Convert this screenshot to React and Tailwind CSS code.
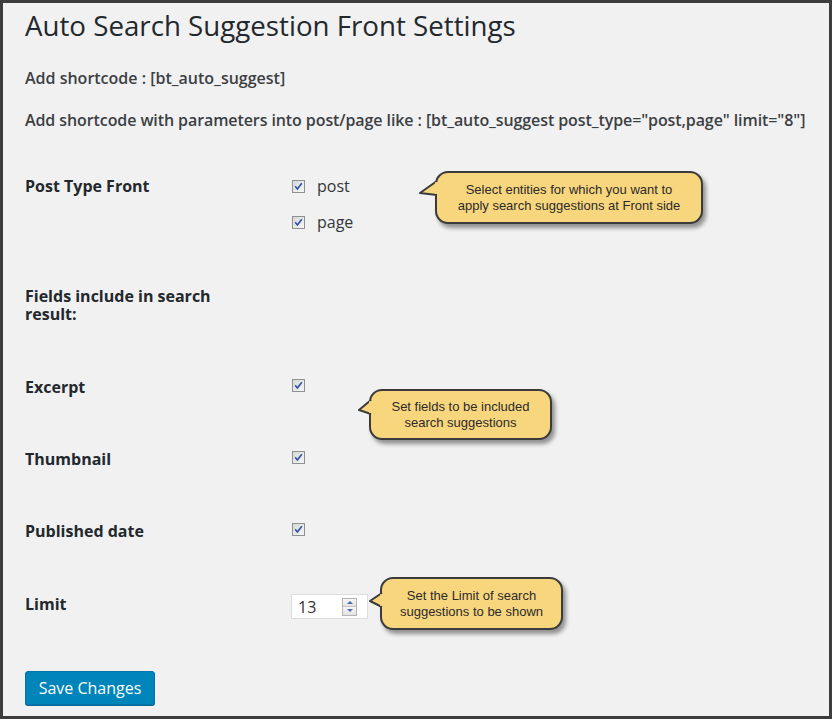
import React from "react";

const Check = () => (
  <svg width="13" height="13" viewBox="0 0 13 13" className="block shrink-0">
    <defs>
      <linearGradient id="cbg" x1="0" y1="0" x2="1" y2="1">
        <stop offset="0" stopColor="#d6d6d6" />
        <stop offset="1" stopColor="#f8f8f8" />
      </linearGradient>
    </defs>
    <rect x="0.5" y="0.5" width="12" height="12" fill="url(#cbg)" stroke="#8f9092" />
    <path d="M3.2 6.3 L5.4 9 L9.8 3.2" fill="none" stroke="#2f4fa6" strokeWidth="1.6" />
  </svg>
);

const Bubble = ({ className, join, tip, len, lines }) => (
  <div
    className={`absolute rounded-[13px] border-2 border-[#3b3b3b] bg-[#f8d67e] shadow-[3px_4px_4px_rgba(0,0,0,0.4)] flex flex-col items-center justify-center font-['Liberation_Sans',Arial,sans-serif] text-[13px] leading-[16px] text-[#2b2b2b] ${className}`}
  >
    <svg
      width={len + 4}
      height="18"
      className="absolute"
      style={{ left: -(len + 2), top: join - 2 }}
      viewBox={`0 0 ${len + 4} 18`}
    >
      <path
        d={`M${len + 2} 0 L1 ${tip} L${len + 2} 14`}
        fill="#f8d67e"
        stroke="#3b3b3b"
        strokeWidth="2"
        strokeLinejoin="round"
      />
      <rect x={len} y="1.2" width="4" height="11.6" fill="#f8d67e" />
    </svg>
    {lines.map((l) => (
      <div key={l}>{l}</div>
    ))}
  </div>
);

const Row = ({ label, className = "", children }) => (
  <div className={`grid grid-cols-[266px_1fr] items-start ${className}`}>
    {label}
    <div>{children}</div>
  </div>
);

const labelCls = "text-[16px] leading-[18px] font-bold text-[#23282d]";

export default function App() {
  return (
    <div className="w-[832px] h-[719px] bg-[#3d3d3d] p-[3px]">
      <div className="relative h-full bg-[#f1f1f1] pl-[22px] font-['Open_Sans',sans-serif]">
        <h1 className="pt-[4px] text-[27.7px] leading-[36px] font-normal text-[#23282d]">
          Auto Search Suggestion Front Settings
        </h1>
        <p className="mt-[25px] text-[16px] leading-[20px] font-semibold text-[#3c3f44]">
          Add shortcode : [bt_auto_suggest]
        </p>
        <p className="mt-[22px] text-[16px] leading-[20px] font-semibold tracking-[-0.09px] text-[#3c3f44]">
          Add shortcode with parameters into post/page like : [bt_auto_suggest post_type="post,page" limit="8"]
        </p>

        <Row className="mt-[44px]" label={<div className={`${labelCls} pt-[3px]`}>Post Type Front</div>}>
          <div className="flex flex-col gap-[12px]">
            {["post", "page"].map((t) => (
              <div key={t} className="h-[24px] flex items-center gap-[12px] pl-[1px]">
                <Check />
                <span className="text-[16px] text-[#32373c]">{t}</span>
              </div>
            ))}
          </div>
        </Row>

        <Row className="mt-[53px]" label={<div className={`${labelCls} w-[215px]`}>Fields include in search result:</div>} />

        <Row className="mt-[55px]" label={<div className={labelCls}>Excerpt</div>}>
          <div className="pl-[1px] pt-[1px]"><Check /></div>
        </Row>
        <Row className="mt-[54px]" label={<div className={labelCls}>Thumbnail</div>}>
          <div className="pl-[1px] pt-[1px]"><Check /></div>
        </Row>
        <Row className="mt-[54px]" label={<div className={labelCls}>Published date</div>}>
          <div className="pl-[1px] pt-[1px]"><Check /></div>
        </Row>

        <Row className="mt-[54px]" label={<div className={`${labelCls} pt-[1px]`}>Limit</div>}>
          <div className="w-[77px] h-[25px] bg-white border border-[#dddddd] flex items-center pl-[6px] pr-[10px]">
            <span className="flex-1 text-[16px] text-[#333] font-['Open_Sans',sans-serif]">13</span>
            <div className="flex flex-col w-[15px] h-[18px] border border-[#b5b5b5] bg-[#eeeeee]">
              <div className="flex-1 flex items-center justify-center border-b border-[#c4c4c4] bg-gradient-to-b from-[#f7f7f7] to-[#e3e3e3]">
                <div className="w-0 h-0 border-x-[3px] border-x-transparent border-b-[3px] border-b-[#4a6cb3]" />
              </div>
              <div className="flex-1 flex items-center justify-center bg-gradient-to-b from-[#f7f7f7] to-[#e3e3e3]">
                <div className="w-0 h-0 border-x-[3px] border-x-transparent border-t-[3px] border-t-[#4a6cb3]" />
              </div>
            </div>
          </div>
        </Row>

        <button className="mt-[52px] w-[130px] h-[34px] rounded-[3px] bg-[#0085ba] border border-[#0073aa] shadow-[0_1px_0_#006799] text-white text-[16px] leading-[30px]">
          Save Changes
        </button>

        <Bubble
          className="left-[432px] top-[168px] w-[268px] h-[53px]"
          join={10}
          tip={12}
          len={16}
          lines={["Select entities for which you want to", "apply search suggestions at Front side"]}
        />
        <Bubble
          className="left-[366px] top-[386px] w-[183px] h-[51px]"
          join={11}
          tip={10}
          len={11}
          lines={["Set fields to be included", "search suggestions"]}
        />
        <Bubble
          className="left-[377px] top-[574px] w-[183px] h-[53px]"
          join={16}
          tip={8}
          len={11}
          lines={["Set the Limit of search", "suggestions to be shown"]}
        />
      </div>
    </div>
  );
}
